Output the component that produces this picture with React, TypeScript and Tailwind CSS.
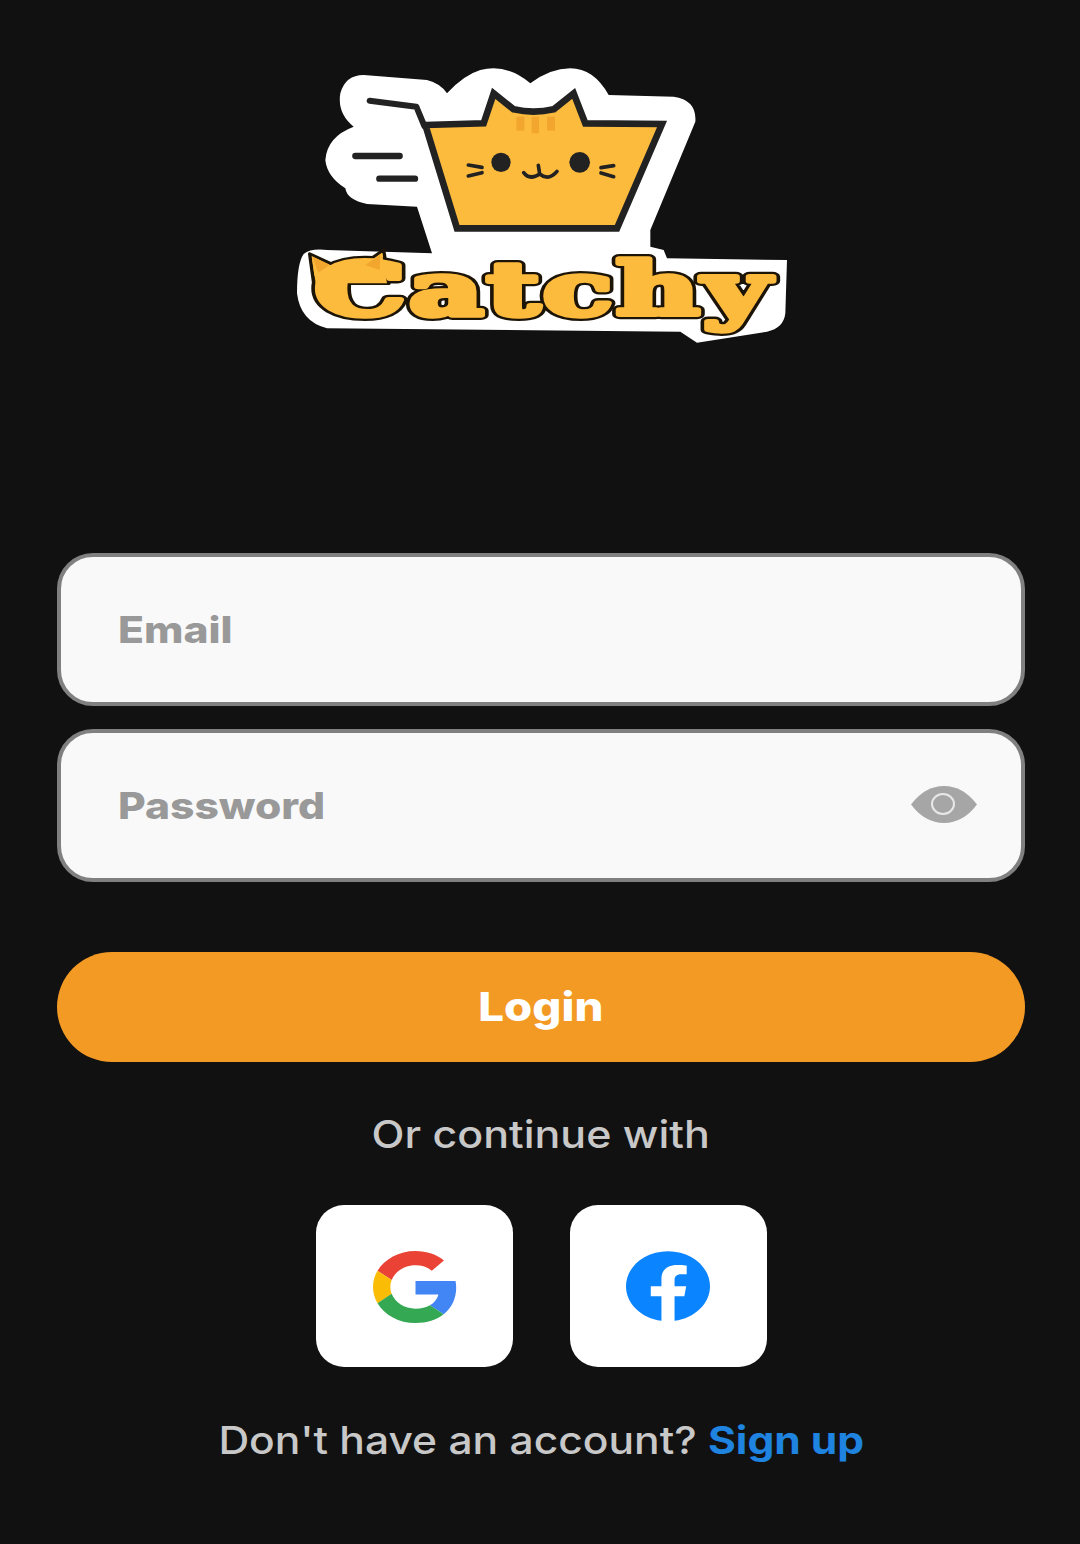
const Logo = () => (
  <svg viewBox="0 0 1568 930" className="block w-[530px] h-[310px] ml-[10px] self-center">
    <path
      d="M240 75 L430 90 Q470 100 490 130 Q540 75 590 60 Q670 40 740 100 Q800 55 860 55 Q930 55 975 135 L1170 140 Q1240 150 1235 215 L1100 540 L1100 590 L1140 600 L1150 625 L1510 630 L1505 790 Q1500 835 1450 845 L1240 878 L1190 845 L130 835 Q50 815 40 730 Q40 640 60 612 Q80 595 130 600 L445 610 L400 470 L250 462 Q190 450 185 415 Q130 380 125 330 Q130 260 210 230 Q160 190 170 130 Q185 75 240 75 Z"
      fill="#ffffff"
    />
    <g fill="none" stroke="#222222" strokeLinecap="round" strokeLinejoin="round">
      <path d="M258 152 L398 170 L422 228" strokeWidth="18" />
      <path d="M215 318 H348" strokeWidth="19" />
      <path d="M287 386 H394" strokeWidth="19" />
    </g>
    <path
      d="M425 225 L600 220 L630 130 L690 178 Q750 192 810 178 L870 130 L905 220 L1135 222 L1000 535 L520 535 Z"
      fill="#fdbb3e"
      stroke="#222222"
      strokeWidth="20"
      strokeLinejoin="miter"
    />
    <g fill="#f2a62e">
      <rect x="698" y="200" width="24" height="42" />
      <rect x="744" y="200" width="22" height="50" />
      <rect x="790" y="200" width="24" height="42" />
    </g>
    <circle cx="652" cy="337" r="29" fill="#222222" />
    <circle cx="888" cy="337" r="31" fill="#222222" />
    <g fill="none" stroke="#222222" strokeWidth="11" strokeLinecap="round">
      <path d="M554 345 L595 352 M554 378 L595 368" />
      <path d="M990 347 L952 353 M990 380 L952 369" />
      <path d="M720 368 Q738 392 768 372 L764 346 M768 372 Q795 394 820 364" />
    </g>
    <path d="M78 612 L150 645 L235 645 L300 600 L316 700 L90 700 Z" fill="#fdbb3e" stroke="#1d1408" strokeWidth="10" strokeLinejoin="round" />
    <text
      x="92"
      y="796"
      textLength="1375"
      lengthAdjust="spacingAndGlyphs"
      letterSpacing="6"
      fontSize="220"
      fill="none"
      stroke="#1d1408"
      strokeWidth="30"
      strokeLinejoin="round"
      className="font-['DejaVu_Serif',serif] font-bold"
    >
      Catchy
    </text>
    <path d="M84 618 L150 650 L235 650 L295 608 L310 700 L96 700 Z" fill="#fdbb3e" />
    <text
      x="92"
      y="796"
      textLength="1375"
      lengthAdjust="spacingAndGlyphs"
      letterSpacing="6"
      fontSize="220"
      fill="#fdbb3e"
      stroke="#fdbb3e"
      strokeWidth="16"
      strokeLinejoin="round"
      className="font-['DejaVu_Serif',serif] font-bold"
    >
      Catchy
    </text>
    <path d="M86 620 L138 644 L104 668 Z M290 614 L288 660 L244 645 Z" fill="#f2a62e" />
  </svg>
);

const Eye = () => (
  <svg viewBox="0 0 66 37" className="block w-[66px] h-[37px] mb-[2px]">
    <path d="M0 18.5 Q14 0 33 0 Q52 0 66 18.5 Q52 37 33 37 Q14 37 0 18.5 Z" fill="#a6a6a6" />
    <ellipse cx="32" cy="18" rx="11" ry="10" fill="none" stroke="#e8e8e8" strokeWidth="2" />
  </svg>
);

const GoogleIcon = () => (
  <svg viewBox="0 0 48 48" preserveAspectRatio="none" className="block w-[85px] h-[72px] ml-[2px] mt-[2px]">
    <path fill="#EA4335" d="M24 9.5c3.54 0 6.71 1.22 9.21 3.6l6.85-6.85C35.9 2.38 30.47 0 24 0 14.62 0 6.51 5.38 2.56 13.22l7.98 6.19C12.43 13.72 17.74 9.5 24 9.5z" />
    <path fill="#4285F4" d="M46.98 24.55c0-1.57-.15-3.09-.38-4.55H24v9.02h12.94c-.58 2.96-2.26 5.48-4.78 7.18l7.73 6c4.51-4.18 7.09-10.36 7.09-17.65z" />
    <path fill="#FBBC05" d="M10.53 28.59c-.48-1.45-.76-2.99-.76-4.59s.27-3.14.76-4.59l-7.98-6.19C.92 16.46 0 20.12 0 24c0 3.88.92 7.54 2.56 10.78l7.97-6.19z" />
    <path fill="#34A853" d="M24 48c6.48 0 11.93-2.13 15.89-5.81l-7.73-6c-2.15 1.45-4.92 2.3-8.16 2.3-6.26 0-11.57-4.22-13.47-9.91l-7.98 6.19C6.51 42.62 14.62 48 24 48z" />
  </svg>
);

const FacebookIcon = () => (
  <svg viewBox="0 0 24 24" preserveAspectRatio="none" className="block w-[84px] h-[70px]">
    <path fill="#0a84ff" d="M24 12.073c0-6.627-5.373-12-12-12s-12 5.373-12 12c0 5.99 4.388 10.954 10.125 11.854v-8.385H7.078v-3.47h3.047V9.43c0-3.007 1.792-4.669 4.533-4.669 1.312 0 2.686.235 2.686.235v2.953H15.83c-1.491 0-1.956.925-1.956 1.874v2.25h3.328l-.532 3.47h-2.796v8.385C19.612 23.027 24 18.062 24 12.073z" />
  </svg>
);

export default function App() {
  return (
    <div className="w-[1080px] h-[1544px] bg-[#111112] flex flex-col pt-[50px] font-['Inter',sans-serif] overflow-hidden">
      <Logo />
      <div className="mt-[193px] ml-[57px] w-[968px] flex flex-col">
        <div className="h-[153px] rounded-[36px] border-4 border-[#808080] bg-[#f9f9f9] flex items-center pl-[57px]">
          <span className="text-[37px] leading-none font-extrabold text-[#999999] origin-left scale-x-[1.15]">Email</span>
        </div>
        <div className="mt-[23px] h-[153px] rounded-[36px] border-4 border-[#808080] bg-[#f9f9f9] flex items-center justify-between pl-[57px] pr-[44px]">
          <span className="text-[37px] leading-none font-extrabold text-[#999999] origin-left scale-x-[1.15]">Password</span>
          <Eye />
        </div>
        <div className="mt-[70px] h-[110px] rounded-full bg-[#f39a24] flex items-center justify-center">
          <span className="text-[40px] leading-none font-extrabold text-white scale-x-[1.14]">Login</span>
        </div>
        <p className="mt-[50px] h-[44px] flex items-center justify-center text-[38px] font-medium text-[#c8c8c8]">
          <span className="scale-x-[1.13]">Or continue with</span>
        </p>
        <div className="mt-[49px] flex justify-center gap-[57px]">
          <div className="w-[197px] h-[162px] rounded-[28px] bg-white flex items-center justify-center">
            <GoogleIcon />
          </div>
          <div className="w-[197px] h-[162px] rounded-[28px] bg-white flex items-center justify-center">
            <FacebookIcon />
          </div>
        </div>
        <p className="mt-[51px] h-[44px] flex items-center justify-center text-[38px] font-medium text-[#c8c8c8]">
          <span className="scale-x-[1.12] whitespace-nowrap">
            Don't have an account? <span className="font-bold text-[#1f84e0]">Sign up</span>
          </span>
        </p>
      </div>
    </div>
  );
}
